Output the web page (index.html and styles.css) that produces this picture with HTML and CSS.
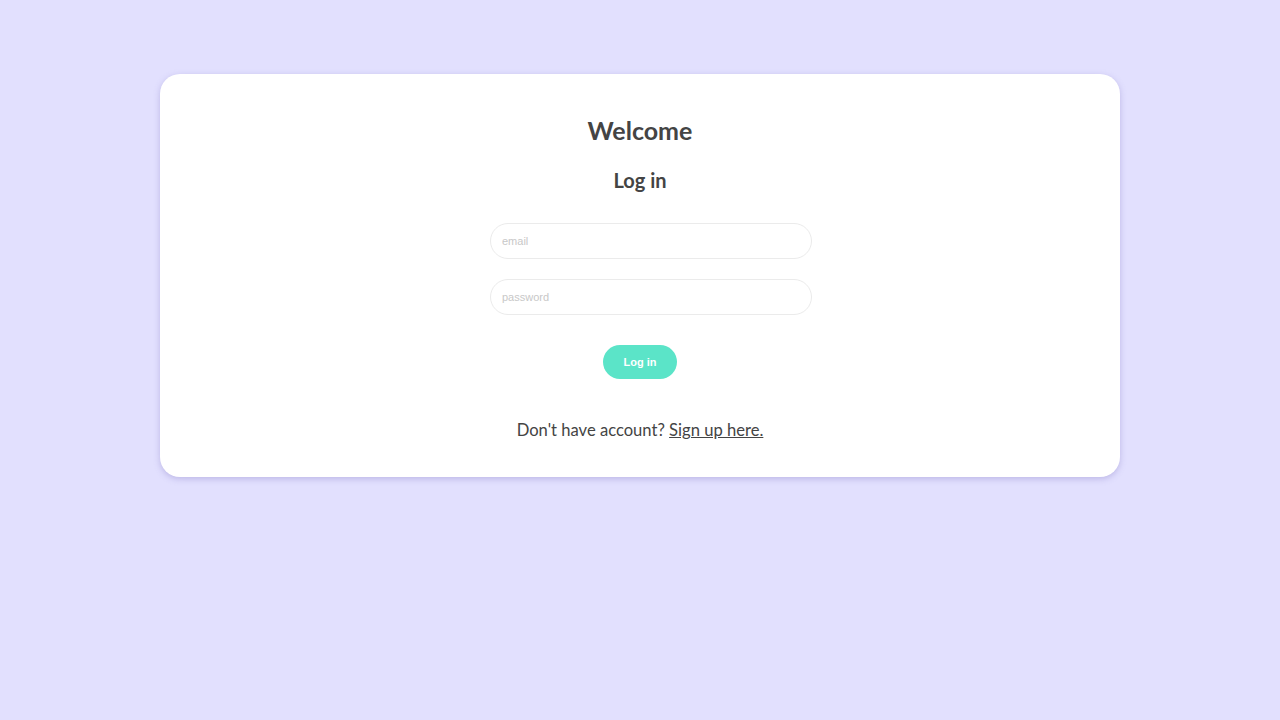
FILE: index.html
```html
<!DOCTYPE html>
<html>
<head>
<meta charset="utf-8">
<link rel="stylesheet" href="styles.css">
</head>
<body>
<main class="page">
  <section class="card">
    <h1 class="title">Welcome</h1>
    <h2 class="subtitle">Log in</h2>
    <form class="form">
      <input class="field" type="email" placeholder="email">
      <input class="field" type="password" placeholder="password">
      <button class="btn" type="button">Log in</button>
    </form>
    <p class="footer">Don't have account? <a class="link" href="#">Sign up here.</a></p>
  </section>
</main>
</body>
</html>
```
FILE: styles.css
```css
html, body {
  margin: 0;
  padding: 0;
  background: #e2e0fe;
  height: 100%;
}
body {
  font-family: "Lato", "Noto Sans", sans-serif;
  color: #444444;
}
.page {
  display: flex;
  justify-content: center;
  padding-top: 74px;
}
.card {
  width: 960px;
  height: 403px;
  box-sizing: border-box;
  background: #ffffff;
  border-radius: 20px;
  box-shadow: 0 2px 6px rgba(120, 110, 190, 0.35);
  display: flex;
  flex-direction: column;
  align-items: center;
  padding-top: 40px;
}
.title {
  margin: 0;
  font-size: 25px;
  font-weight: 700;
  line-height: 32px;
  color: #444444;
}
.subtitle {
  margin: 22px 0 0;
  font-size: 20px;
  font-weight: 700;
  line-height: 24px;
  color: #444444;
}
.form {
  display: flex;
  flex-direction: column;
  align-items: center;
  margin-top: 31px;
}
.field {
  width: 322px;
  height: 36px;
  box-sizing: border-box;
  border: 1px solid #ebebeb;
  border-radius: 18px;
  padding: 0 11px;
  margin: 0 0 20px 22px;
  font-family: "Liberation Sans", Arial, sans-serif;
  font-size: 11px;
  color: #444;
  outline: none;
}
.field::placeholder {
  color: #c8c8c8;
}
.btn {
  margin-top: 10px;
  width: 74px;
  height: 34px;
  border: none;
  border-radius: 17px;
  background: #5be4c8;
  color: #ffffff;
  font-family: "Liberation Sans", Arial, sans-serif;
  font-weight: 700;
  font-size: 11px;
  cursor: pointer;
}
.footer {
  margin: 40px 0 0;
  font-size: 16.6px;
  line-height: 22px;
  color: #444444;
}
.link {
  color: #444444;
  text-decoration: underline;
}
```
